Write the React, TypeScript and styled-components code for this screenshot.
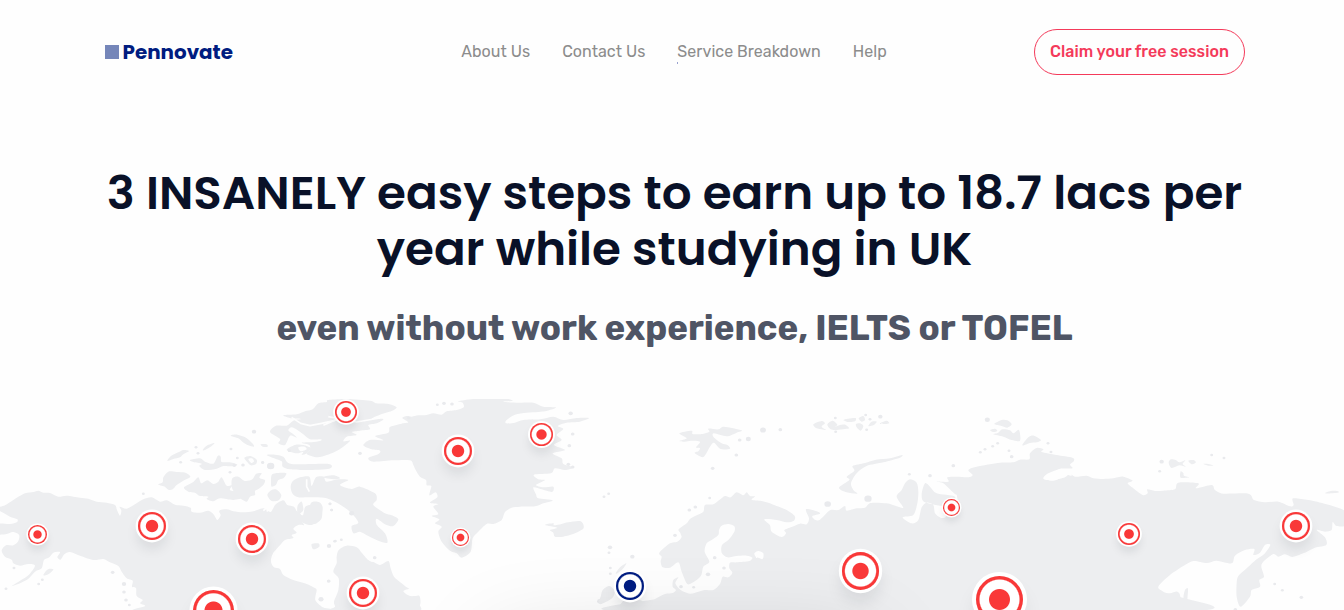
import React from 'react';
import styled, { createGlobalStyle } from 'styled-components';

const GlobalStyle = createGlobalStyle`
  *, *::before, *::after { box-sizing: border-box; }
  body { margin: 0; background: #fff; overflow: hidden; }
`;

const Page = styled.div`
  display: flex;
  flex-direction: column;
  height: 610px;
  overflow: hidden;
  background: #fefefe;
  font-family: Rubik, Roboto, sans-serif;
`;

const Header = styled.header`
  display: grid;
  grid-template-columns: 1fr auto 1fr;
  align-items: center;
  padding: 29px 99px 0 105px;
`;

const Logo = styled.div`
  display: flex;
  align-items: center;
  gap: 3.5px;
  color: #001c80;
  font: 700 19.9px/30px Poppins, sans-serif;
`;

const LogoMark = styled.span`
  width: 14px;
  height: 14px;
  background: #7586b9;
`;

const Nav = styled.nav`
  display: flex;
  gap: 32px;
  margin-right: 2px;
`;

const NavLink = styled.a<{ $marked?: boolean }>`
  position: relative;
  color: #8c8c8c;
  font-size: 16px;
  line-height: 24px;
  letter-spacing: 0.04px;
  &::after {
    content: '';
    display: ${(p) => (p.$marked ? 'block' : 'none')};
    position: absolute;
    left: 0;
    bottom: 0;
    width: 1px;
    height: 2px;
    background: #9aa2cf;
  }
`;

const ClaimButton = styled.button`
  justify-self: end;
  width: 211px;
  height: 46px;
  padding: 0;
  border: 1px solid #f43a5a;
  border-radius: 23px;
  background: transparent;
  color: #f43a5a;
  font: 500 16px/24px Rubik, sans-serif;
  letter-spacing: 0.04px;
`;

const Hero = styled.section`
  padding: 90px 0 0 5px;
  text-align: center;
`;

const Title = styled.h1`
  margin: 0 auto;
  width: 1160px;
  color: #091128;
  font: 600 46.8px/56px Poppins, sans-serif;
`;

const Subtitle = styled.h2`
  margin: 28px 0 0;
  color: #4f5565;
  font: 700 34.88px/46px Rubik, sans-serif;
`;

const MapArea = styled.section`
  position: relative;
  flex: none;
  width: 1344px;
  height: 211px;
  margin-top: 48px;
  overflow: hidden;
`;

const MapDrawing = styled.svg`
  display: block;
`;

const VideoCard = styled.div`
  position: absolute;
  left: 500px;
  top: 251px;
  width: 365px;
  height: 200px;
  box-shadow: 0 0 90px 5px rgba(0, 0, 0, 0.17);
`;

const Pin = styled.span<{ $x: number; $y: number; $r: number; $color?: string }>`
  position: absolute;
  left: ${(p) => p.$x - p.$r}px;
  top: ${(p) => p.$y - p.$r}px;
  width: ${(p) => p.$r * 2}px;
  height: ${(p) => p.$r * 2}px;
  border-radius: 50%;
  background: radial-gradient(
    circle,
    ${(p) => p.$color || '#f93838'} ${(p) => p.$r * 0.44 - 0.5}px,
    #fff ${(p) => p.$r * 0.44 + 0.5}px,
    #fff ${(p) => p.$r * 0.84 - 0.6}px,
    ${(p) => p.$color || '#f93838'} ${(p) => p.$r * 0.84 + 0.6}px
  );
  box-shadow: 0 0 0 ${(p) => p.$r * 0.17}px #fff,
    0 ${(p) => p.$r * 0.6}px ${(p) => p.$r * 0.9}px rgba(20, 25, 40, 0.1);
`;

/* Turns "x,y x,y ..." into a closed, softly rounded outline. */
const outline = (points: string) => {
  const p = points.trim().split(/\s+/).map((s) => s.split(',').map(Number));
  const n = p.length;
  const k = 7;
  let d = `M${p[0][0]} ${p[0][1]}`;
  for (let i = 0; i < n; i++) {
    const a = p[(i + n - 1) % n];
    const b = p[i];
    const c = p[(i + 1) % n];
    const e = p[(i + 2) % n];
    d += `C${(b[0] + (c[0] - a[0]) / k).toFixed(1)} ${(b[1] + (c[1] - a[1]) / k).toFixed(1)} ${(c[0] - (e[0] - b[0]) / k).toFixed(1)} ${(c[1] - (e[1] - b[1]) / k).toFixed(1)} ${c[0]} ${c[1]}`;
  }
  return d + 'Z';
};

type Region = { x: number; land: string[]; water?: string[]; channels?: string[]; islets: string };

const regions: Region[] = [
  {
    x: 0,
    land: [
      '-10,355 15,346 40,330 75,310 100,306 115,302 130,308 150,309 175,320 200,317 240,323 265,326 290,335 320,338 345,345 351,360 360,377 364,362 359,350 380,356 405,343 430,328 455,322 480,335 500,331 525,344 550,347 572,353 575,365 600,368 625,362 640,372 652,390 662,376 658,362 680,358 700,364 730,367 760,364 790,355 812,366 826,344 850,331 862,345 882,350 890,363 900,371 909,376 915,352 928,345 950,350 965,352 965,385 945,402 925,394 915,385 905,393 912,405 895,405 880,416 890,428 875,435 880,444 855,450 840,466 818,492 813,515 822,532 840,537 850,555 880,570 920,582 940,592 950,600 946,630 968,652 990,665 430,665 436,648 420,640 428,630 410,618 408,594 396,590 398,572 380,565 365,545 355,528 330,517 310,507 280,510 240,497 210,486 193,493 182,509 172,502 180,486 160,488 148,502 132,510 125,535 105,545 80,570 35,589 60,572 85,556 105,527 85,522 60,527 40,520 35,509 15,500 5,482 18,466 40,466 55,453 57,434 38,426 20,432 -10,432 -10,402 30,402 50,397 52,388 30,380 12,370',
      '490,262 505,245 530,246 556,248 571,260 550,272 530,285 518,298 505,299 492,289 475,284 488,277',
      '552,292 580,276 595,262 604,280 622,271 640,282 655,275 665,262 680,287 698,285 690,300 720,308 731,322 700,330 660,325 640,334 620,327 625,320 600,318 585,308 565,305',
      '697,265 715,260 735,273 757,268 768,252 785,250 778,263 795,270 790,285 774,298 765,303 765,315 750,320 740,335 720,325 705,310 695,290',
      '818,252 858,249 850,265 835,270 828,284 815,290 813,275',
      '802,315 814,301 830,299 844,315 836,331 815,333',
      '570,210 600,205 615,215 640,221 653,198 662,200 665,216 690,217 712,224 695,229 670,228 650,236 615,240 598,228 605,221 580,216',
      '502,213 513,198 535,187 550,180 567,183 550,193 540,202 520,207',
      '608,180 620,167 643,159 635,168 615,180',
      '692,137 712,134 738,143 757,160 762,170 745,166 727,155 715,145',
      '733,203 752,198 770,209 768,222 752,226 742,216',
      '782,163 800,163 803,170 788,170',
      '800,195 825,194 850,200 875,222 985,222 988,236 920,240 870,238 848,230 845,214 820,204',
      '860,180 885,165 910,165 933,175 920,190 905,195 910,185 890,190',
      '130,556 136,545 146,537 160,538 154,546 142,554',
    ],
    water: ['745,207 756,205 762,214 754,219', '895,172 914,170 920,178 902,184'],
    channels: ['M790 362L806 348 824 337', 'M372 350L405 332', 'M922 268L921 290 930 306', 'M880 98L920 114 960 102 1000 98', 'M800 364L816 350'],
    islets: '588,172,4 594,190,4 542,217,4 693,177,4 712,204,4 703,226,5 729,225,5 788,217,4 812,228,9 762,125,6 430,311,4 690,247,4 868,182,4 42,534,4 18,596,4 338,547,5 372,582,6 372,606,5 116,582,4 127,569,4 378,630,5 388,645,4 990,341,4 995,360,4 1004,454,4 986,573,5',
  },
  {
    x: 260,
    land: [
      '70,76 110,73 135,64 158,58 175,40 200,36 205,30 260,27 330,32 350,40 385,42 410,52 395,63 360,74 335,86 370,87 350,100 325,105 330,118 300,122 275,126 290,135 260,140 250,154 270,152 250,170 225,185 200,195 172,202 140,192 150,180 148,165 125,158 155,157 180,153 183,148 150,148 130,133 112,120 95,112 85,121 100,133 110,143 90,137 75,165 55,160 60,147 30,126 48,107 80,107 100,92 122,87 95,85',
      '427,84 440,78 455,80 475,76 500,75 520,70 545,74 560,64 590,60 611,52 608,38 595,34 640,27 730,25 758,32 730,35 775,38 820,38 850,50 888,52 862,62 835,66 800,68 765,74 740,90 738,100 765,98 790,90 840,88 880,80 910,90 950,84 988,84 960,95 920,98 893,108 910,117 890,135 905,150 882,165 915,180 878,190 905,205 910,222 940,232 915,240 885,235 873,250 822,254 835,268 855,270 828,285 850,292 880,290 876,306 845,298 820,292 828,313 835,325 878,331 850,340 825,349 780,350 755,353 735,366 725,390 700,402 680,402 655,425 638,445 632,485 605,503 590,490 570,482 545,455 535,425 545,410 525,400 538,388 515,378 535,372 520,350 535,342 510,338 532,322 527,307 508,316 514,288 500,286 498,270 480,260 467,240 460,225 450,211 400,211 340,215 325,204 355,192 360,182 335,178 310,166 330,150 370,151 345,138 385,128 390,111 425,101 445,97',
      '92,292 98,274 120,262 148,260 155,288 168,262 190,260 200,275 235,268 265,270 240,285 275,297 300,290 345,310 350,330 340,345 375,370 395,376 415,388 400,408 378,404 350,386 350,404 375,430 382,458 355,452 325,438 300,425 280,430 275,408 295,398 275,370 250,350 200,325 150,322 115,322 98,312',
      '185,262 220,256 240,264 225,268',
      '236,480 260,467 290,472 305,488 325,510 342,517 360,525 385,513 392,535 402,560 425,580 440,592 470,610 480,622 480,645 462,665 215,665 225,650 222,635 235,600 236,565 220,545 230,520 230,500',
      '855,405 880,400 882,406 905,402 925,397 962,394 971,414 945,430 910,440 885,440 880,428 870,420 892,413',
      '125,335 130,360 120,372 135,378 143,365 155,337 178,337 188,352 184,375 172,392 155,405 135,401 115,388 112,350',
      '155,462 175,460 178,470 160,478',
    ],
    water: ['305,478 330,487 347,484 362,493 365,510 335,515 318,500', '430,604 450,597 482,606 482,615 450,618'],
    channels: ['M95 82L122 100 150 107 185 100 222 92 245 78', 'M190 106L240 84', 'M140 268L140 290 148 305', 'M205 80L290 96 360 84'],
    islets: '532,44,4 552,40,5 576,42,5 446,84,5 300,190,5 932,70,6 938,132,5 928,167,5 925,223,5 938,231,5 210,342,4 215,360,4 275,370,7 207,468,6 226,453,4 244,449,4 344,503,5 206,574,4 183,628,7 8,218,4 32,228,10 88,182,4 1019,634,7',
  },
  {
    x: 590,
    land: [
      '120,665 195,627 225,612 248,609 258,600 248,590 250,570 265,562 256,580 272,600 300,611 325,605 345,600 370,600 390,582 398,560 415,562 427,548 418,535 420,518 440,517 478,513 487,503 470,497 440,498 412,502 395,488 396,465 415,450 433,425 433,409 415,402 395,407 387,420 385,435 365,450 350,460 344,485 358,515 340,530 334,555 320,570 300,582 290,580 275,545 265,517 240,533 218,532 212,515 215,500 208,488 240,460 262,455 275,440 265,420 290,400 300,387 320,376 340,365 345,345 370,343 388,330 405,318 422,322 440,307 460,316 470,307 480,318 495,319 485,329 515,333 550,344 590,360 614,378 612,392 590,397 560,390 523,388 540,406 545,425 575,441 588,430 583,420 605,411 630,401 650,403 657,385 648,358 680,364 690,371 667,378 675,389 690,389 720,361 745,360 765,348 770,362 800,355 825,353 842,339 890,340 920,349 940,353 920,320 935,300 945,280 960,268 980,278 985,305 982,340 970,375 938,382 965,400 985,390 995,352 1010,338 1030,345 1035,370 1052,383 1067,381 1071,361 1080,345 1095,320 1040,310 1020,290 1005,280 995,315 1008,338 1095,350 1101,318 1092,310 1060,280 1040,275 1075,275 1072,262 1100,260 1135,262 1148,255 1135,240 1160,230 1230,218 1270,217 1290,209 1318,208 1320,190 1340,174 1360,178 1355,186 1400,195 1447,203 1452,212 1440,224 1447,235 1410,236 1390,250 1364,266 1390,270 1425,262 1440,250 1455,260 1490,257 1510,265 1540,267 1570,265 1600,260 1628,272 1613,280 1630,295 1658,315 1673,310 1672,298 1695,303 1720,302 1755,298 1765,278 1825,280 1818,295 1865,285 1875,300 1900,311 1975,311 1992,330 2025,337 2065,335 2100,349 2111,345 2109,325 2155,330 2210,343 2270,366 2270,405 2240,408 2228,396 2225,420 2205,425 2180,420 2205,442 2209,465 2175,473 2140,490 2107,501 2085,493 2065,500 2050,492 2020,515 2014,530 2022,560 2008,570 2010,590 1985,600 1980,620 1952,650 1940,620 1940,580 1945,558 1970,535 2000,508 2022,493 2041,465 2025,465 2010,488 1990,495 1993,477 1965,480 1935,497 1925,520 1880,512 1850,519 1810,513 1780,528 1740,555 1705,590 1720,605 1740,610 1762,605 1771,620 1768,665',
      '1785,600 1794,596 1792,635 1795,665 1782,665 1780,625',
      '268,130 305,122 308,132 335,132 358,125 355,116 385,118 402,110 455,121 440,128 410,139 372,130 370,140 395,160 412,165 420,176 392,177 372,158 360,170 340,201 314,189 325,184 330,175 318,172 330,155 303,152 285,155 268,153 290,145',
      '747,293 778,270 770,260 793,242 788,228 825,219 858,209 900,205 936,195 930,203 880,217 830,228 800,250 783,280 790,300 802,311 770,307',
      '25,637 32,620 38,600 58,588 74,603 66,625 35,642',
      '80,665 90,645 112,625 155,632 152,645 125,665',
      '77,550 90,532 109,520 100,535 85,548',
      '670,103 695,93 705,100 695,110 708,120 680,115',
      '712,103 728,92 742,104 735,110 750,105 766,104 778,115 765,117 740,120 722,118',
      '760,90 775,86 797,84 795,94 775,96',
      '798,102 810,100 820,108 812,122 800,112',
      '806,85 820,78 825,90 815,95',
      '835,108 845,95 860,95 850,106',
      '870,100 890,92 898,100 885,102',
    ],
    islets: '519,120,8 571,119,5 475,147,7 449,150,5 439,195,5 368,235,5 56,311,4 42,320,4 359,324,4 316,351,5 298,360,5 255,436,5 60,472,6 57,488,4 127,500,6 61,534,4 61,551,4 374,503,5 354,553,6 402,534,5 311,592,4 273,590,5 713,342,9 834,326,10 736,84,4 827,75,4 840,88,4 871,80,6 830,119,4 737,125,4 1090,227,5 1020,257,5 958,253,4',
    water: ['493,490 505,483 520,490 518,507 505,503 497,500', '245,425 262,420 272,432 268,448 250,450'],
  },
  {
    x: 800,
    land: [
      '583,102 605,90 622,91 635,103 622,113 605,108',
      '580,133 595,128 607,118 630,121 640,130 657,120 660,152 635,150 610,140',
      '667,166 685,142 702,137 723,150 710,157 690,159',
      '570,120 585,116 592,123 580,126',
    ],
    water: ['730,266 745,250 785,236 790,250 795,258 760,272'],
    channels: ['M780 240L822 254', 'M785 246L815 256'],
    islets: '562,89,7 593,160,4 578,169,4 555,178,4 541,187,4 627,182,4 635,200,5 744,160,4 753,186,4',
  },
  {
    x: 1060,
    land: [
      '326,218 333,208 347,210 358,217 376,211 368,222 377,230 358,226 335,234',
      '362,244 370,249 372,257 388,262 362,263',
      '385,212 400,210 408,217 396,223',
      '430,222 445,222 460,227 445,227',
      '795,310 812,303 832,303 834,308',
    ],
    islets: '305,215,6 299,244,4 455,195,4 492,204,4 644,582,4 667,601,4 724,622,5 526,659,5',
  },
];

const dots = (list: string) => list.split(' ').map((s) => s.split(',').map(Number));

const pins: { x: number; y: number; r: number; color?: string }[] = [
  { x: 37.2, y: 135.5, r: 9.5 },
  { x: 151.7, y: 127.3, r: 14 },
  { x: 251.5, y: 139.5, r: 14 },
  { x: 213.3, y: 211, r: 20.5 },
  { x: 345.8, y: 12.7, r: 11 },
  { x: 457.7, y: 52.3, r: 14 },
  { x: 541.5, y: 35.5, r: 11.7 },
  { x: 460.5, y: 138.3, r: 8.7 },
  { x: 362.7, y: 194.4, r: 14 },
  { x: 630.3, y: 186.5, r: 14, color: '#001c80' },
  { x: 860.5, y: 172, r: 18.6 },
  { x: 951.3, y: 108.5, r: 8.7 },
  { x: 999.3, y: 200.5, r: 23.8 },
  { x: 1129, y: 134.5, r: 11 },
  { x: 1296.3, y: 127.3, r: 14 },
];

const WorldMap = () => (
  <MapDrawing width="1344" height="211" viewBox="0 399 1344 211">
    {regions.map((region) => (
      <g key={region.x} transform={`translate(${region.x} 390) scale(.33333)`}>
        {region.land.map((s) => (
          <path key={s} d={outline(s)} fill="#edeef0" />
        ))}
        {region.water?.map((s) => (
          <path key={s} d={outline(s)} fill="#fefefe" />
        ))}
        {region.channels?.map((d) => (
          <path key={d} d={d} fill="none" stroke="#fefefe" strokeWidth="5" strokeLinejoin="round" />
        ))}
        {dots(region.islets).map(([x, y, r]) => (
          <ellipse key={`${x}-${y}`} cx={x} cy={y} rx={r * 1.1} ry={r * 0.95} fill="#e9eaed" />
        ))}
      </g>
    ))}
  </MapDrawing>
);

export default function App() {
  return (
    <Page>
      <GlobalStyle />
      <Header>
        <Logo>
          <LogoMark />
          Pennovate
        </Logo>
        <Nav>
          <NavLink>About Us</NavLink>
          <NavLink>Contact Us</NavLink>
          <NavLink $marked>Service Breakdown</NavLink>
          <NavLink>Help</NavLink>
        </Nav>
        <ClaimButton>Claim your free session</ClaimButton>
      </Header>
      <Hero>
        <Title>3 INSANELY easy steps to earn up to 18.7 lacs per year while studying in UK</Title>
        <Subtitle>even without work experience, IELTS or TOFEL</Subtitle>
      </Hero>
      <MapArea>
        <WorldMap />
        <VideoCard />
        {pins.map((p) => (
          <Pin key={`${p.x}-${p.y}`} $x={p.x} $y={p.y} $r={p.r} $color={p.color} />
        ))}
      </MapArea>
    </Page>
  );
}
